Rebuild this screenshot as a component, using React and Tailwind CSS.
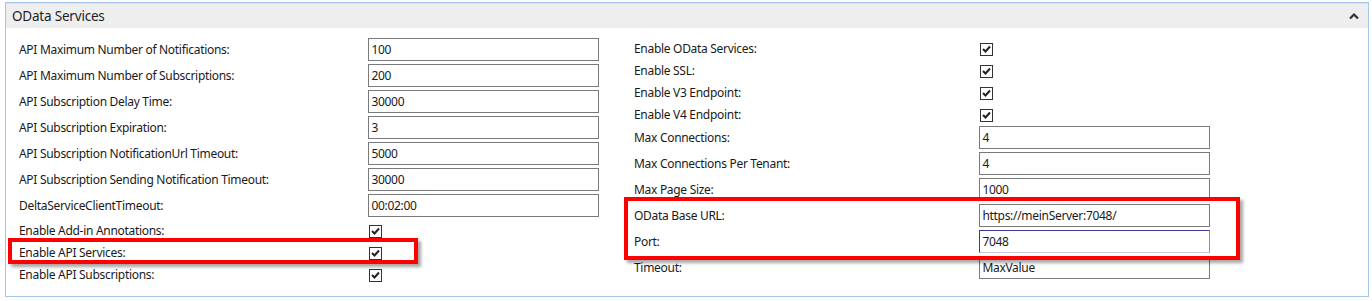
import React from 'react';

const leftFields = [
    { label: 'API Maximum Number of Notifications:', value: '100' },
    { label: 'API Maximum Number of Subscriptions:', value: '200' },
    { label: 'API Subscription Delay Time:', value: '30000' },
    { label: 'API Subscription Expiration:', value: '3' },
    { label: 'API Subscription NotificationUrl Timeout:', value: '5000' },
    { label: 'API Subscription Sending Notification Timeout:', value: '30000' },
    { label: 'DeltaServiceClientTimeout:', value: '00:02:00' },
    { label: 'Enable Add-in Annotations:', check: true },
    { label: 'Enable API Services:', check: true },
    { label: 'Enable API Subscriptions:', check: true },
];

const rightFields = [
    { label: 'Enable OData Services:', check: true },
    { label: 'Enable SSL:', check: true },
    { label: 'Enable V3 Endpoint:', check: true },
    { label: 'Enable V4 Endpoint:', check: true },
    { label: 'Max Connections:', value: '4' },
    { label: 'Max Connections Per Tenant:', value: '4' },
    { label: 'Max Page Size:', value: '1000' },
    { label: 'OData Base URL:', value: 'https://meinServer:7048/' },
    { label: 'Port:', value: '7048', focused: true },
    { label: 'Timeout:', value: 'MaxValue' },
];

function CheckBox() {
    return (
        <div className="w-[13px] h-[13px] border border-[#333] bg-white flex items-center justify-center">
            <svg width="9" height="8" viewBox="0 0 9 8">
                <path d="M1 4 L3.5 6.5 L8 1.5" fill="none" stroke="#222" strokeWidth="2" />
            </svg>
        </div>
    );
}

function FieldRow({ field, labelWidth }) {
    if (field.check) {
        return (
            <div className="flex items-center h-[22px]">
                <div className={labelWidth}>{field.label}</div>
                <CheckBox />
            </div>
        );
    }
    return (
        <div className="flex items-start h-[26px]">
            <div className={`${labelWidth} h-[23px] flex items-center`}>{field.label}</div>
            <div
                className={
                    field.focused
                        ? 'w-[231px] h-[23px] border border-[#3d3a8f] border-b-[#c9c6e6] border-r-[#8c88c4] bg-white flex items-center pl-[2px]'
                        : 'w-[231px] h-[23px] border border-[#7a7a7a] bg-white flex items-center pl-[2px]'
                }
            >
                {field.value}
            </div>
        </div>
    );
}

export default function App() {
    return (
        <div className="w-[1372px] h-[301px] bg-white pt-[2px] pl-[5px] text-[12px] tracking-[-0.3px] text-[#1a1a1a]" style={{ fontFamily: '"Noto Sans", "Open Sans", sans-serif' }}>
            <div className="w-[1364px] h-[295px] border border-[#a4c4ec] bg-white">
                <div className="h-[25px] bg-[#eeeeee] border-t border-[#e2e2e2] flex items-center justify-between pl-[6px] pr-[9px]">
                    <span className="text-[13.5px] tracking-[-0.2px] text-[#1e1e1e]">OData Services</span>
                    <svg width="10" height="6" viewBox="0 0 10 6">
                        <path d="M1 5.5 L5 1.5 L9 5.5" fill="none" stroke="#333" strokeWidth="2.2" />
                    </svg>
                </div>

                <div className="relative pt-[10px] pl-[13px] flex gap-[35px]">
                    <div className="w-[580px] flex flex-col">
                        {leftFields.map((f) => (
                            <FieldRow key={f.label} field={f} labelWidth="w-[350px]" />
                        ))}
                    </div>
                    <div className="w-[576px] flex flex-col">
                        {rightFields.map((f) => (
                            <FieldRow key={f.label} field={f} labelWidth="w-[346px]" />
                        ))}
                    </div>

                    {/* annotation boxes */}
                    <div className="absolute left-[2px] top-[210px] w-[410px] h-[26px] border-4 border-[#ff0000] shadow-[3px_3px_3px_rgba(0,0,0,0.35)]" />
                    <div className="absolute left-[618px] top-[169px] w-[616px] h-[63px] border-4 border-[#ff0000] shadow-[3px_3px_3px_rgba(0,0,0,0.35)]" />
                </div>
            </div>
        </div>
    );
}
